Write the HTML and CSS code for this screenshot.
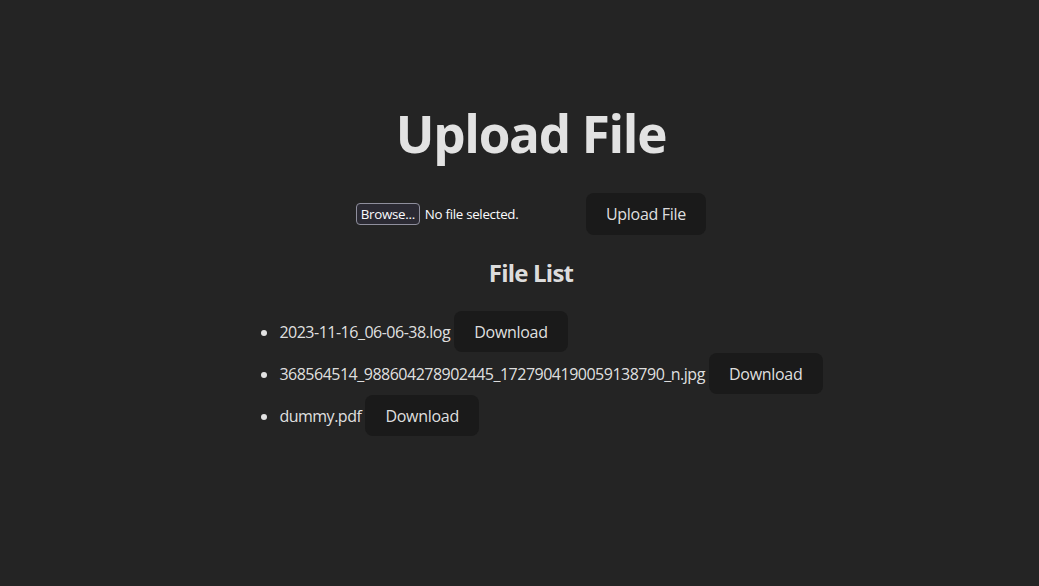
FILE: index.html
```html
<!DOCTYPE html>
<html lang="en">
<head>
<meta charset="utf-8">
<title>Upload File</title>
<link rel="stylesheet" href="styles.css">
</head>
<body>
<main class="app">
  <h1 class="title">Upload File</h1>
  <form class="upload-form">
    <span class="file-input">
      <span class="file-browse">Browse...</span>
      <span class="file-status">No file selected.</span>
    </span>
    <button type="button" class="btn">Upload File</button>
  </form>
  <h2 class="subtitle">File List</h2>
  <ul class="file-list">
    <li class="file-item"><span class="file-name">2023-11-16_06-06-38.log</span><button type="button" class="btn">Download</button></li>
    <li class="file-item"><span class="file-name">368564514_988604278902445_1727904190059138790_n.jpg</span><button type="button" class="btn">Download</button></li>
    <li class="file-item"><span class="file-name">dummy.pdf</span><button type="button" class="btn">Download</button></li>
  </ul>
</main>
</body>
</html>
```

FILE: styles.css
```css
html, body {
  margin: 0;
  padding: 0;
}

body {
  background: #242424;
  color: rgba(255, 255, 255, 0.87);
  font-family: "Open Sans", "Noto Sans", sans-serif;
  font-size: 16px;
  line-height: 1.5;
  min-height: 100vh;
  display: flex;
  justify-content: center;
}

.app {
  text-align: center;
  padding: 105px 0 32px 23px;
}

.title {
  font-size: 51.2px;
  line-height: 1.1;
  font-weight: 700;
  margin: 0 0 32px;
  letter-spacing: -1.3px;
}

.upload-form {
  display: flex;
  justify-content: center;
  align-items: center;
  gap: 4px;
}

.file-input {
  display: inline-flex;
  align-items: center;
  width: 226px;
  font-size: 13.33px;
  line-height: 16px;
  text-align: left;
}

.file-browse {
  box-sizing: border-box;
  height: 22px;
  padding: 2px 4px;
  border: 1px solid #8f8f9d;
  border-radius: 4px;
  background: #2b2a33;
  color: #fbfbfe;
  letter-spacing: -0.3px;
}

.file-status {
  margin-left: 5px;
  color: #fbfbfe;
  letter-spacing: -0.3px;
}

.btn {
  font-family: inherit;
  font-size: 16px;
  font-weight: 500;
  line-height: 20px;
  padding: 9.6px 19.2px;
  border: 1px solid transparent;
  border-radius: 8px;
  background: #1a1a1a;
  color: rgba(255, 255, 255, 0.87);
  cursor: pointer;
  letter-spacing: -0.3px;
}

.subtitle {
  font-size: 24px;
  line-height: 36px;
  font-weight: 700;
  margin: 20px 0;
  letter-spacing: -0.8px;
}

.file-list {
  display: inline-block;
  text-align: left;
  margin: 0;
  padding-left: 40px;
}

.file-item {
  height: 42px;
  line-height: 42px;
}

.file-name {
  letter-spacing: -0.5px;
  margin-right: 4px;
}
```
